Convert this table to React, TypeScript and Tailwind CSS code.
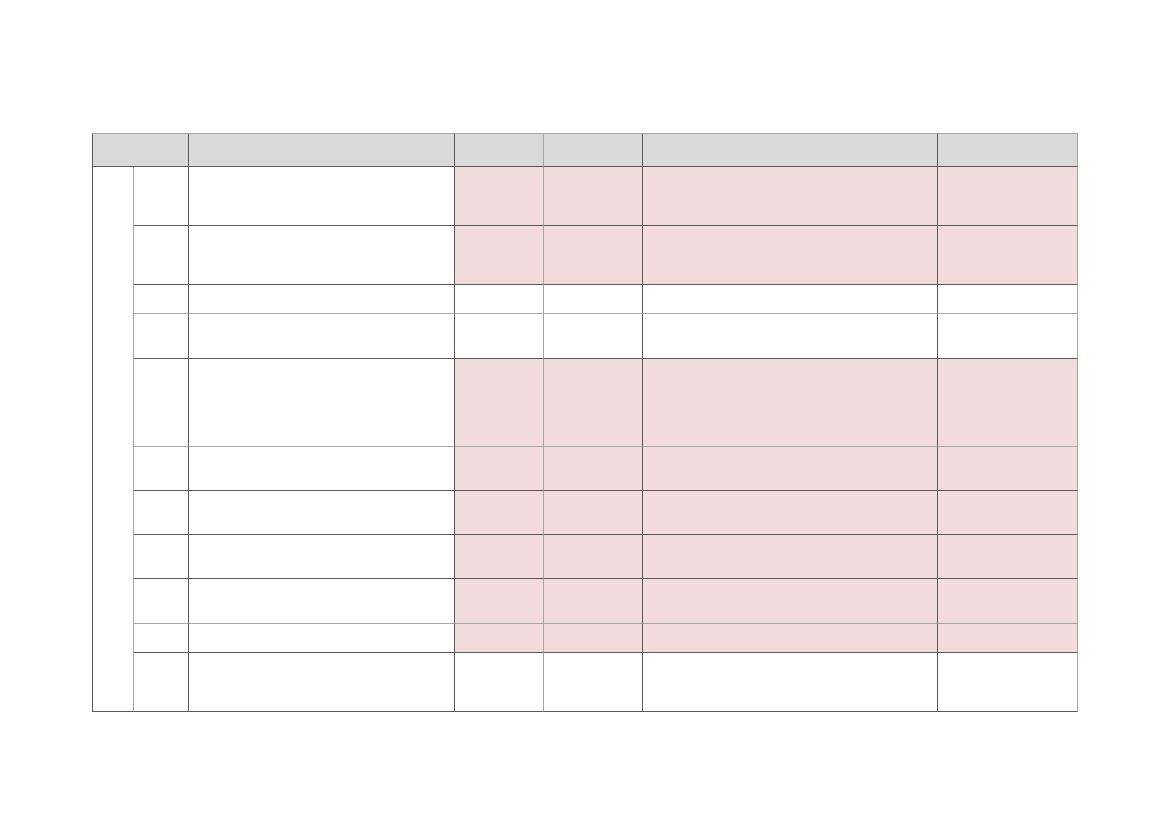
import React from "react"

// column widths include each cell's right border
const cols = [
  { w: "w-[41px]", line: "border-r-[#a6a6a6]" },
  { w: "w-[55px]", line: "border-r-[#595959]" },
  { w: "w-[266px]", line: "border-r-[#595959]" },
  { w: "w-[89px]", line: "border-r-[#a6a6a6]" },
  { w: "w-[99px]", line: "border-r-[#595959]" },
  { w: "w-[295px]", line: "border-r-[#595959]" },
  { w: "w-[140px]", line: "border-r-[#a6a6a6]" },
]

const rows = [
  { h: "h-[59px]", line: "border-b-[#595959]", pink: true },
  { h: "h-[59px]", line: "border-b-[#595959]", pink: true },
  { h: "h-[29px]", line: "border-b-[#a6a6a6]", pink: false },
  { h: "h-[45px]", line: "border-b-[#595959]", pink: false },
  { h: "h-[88px]", line: "border-b-[#a6a6a6]", pink: true },
  { h: "h-[44px]", line: "border-b-[#595959]", pink: true },
  { h: "h-[44px]", line: "border-b-[#595959]", pink: true },
  { h: "h-[44px]", line: "border-b-[#595959]", pink: true },
  { h: "h-[45px]", line: "border-b-[#a6a6a6]", pink: true },
  { h: "h-[29px]", line: "border-b-[#595959]", pink: true },
  { h: "h-[59px]", line: "border-b-[#595959]", pink: false },
]

export default function App() {
  return (
    <div className="w-[1169px] h-[826px] bg-white font-['Liberation_Sans',sans-serif] pt-[133px] pl-[92px]">
      <div className="inline-flex flex-col border-l border-t border-l-[#595959] border-t-[#a6a6a6]">
        {/* header */}
        <div className="flex h-[33px] bg-[#d9d9d9]">
          <div className="w-[96px] border-r border-b border-r-[#595959] border-b-[#595959]" />
          {cols.slice(2).map((c, i) => (
            <div key={i} className={`${c.w} border-r border-b border-b-[#595959] ${c.line}`} />
          ))}
        </div>

        <div className="flex">
          {/* merged first column */}
          <div className={`${cols[0].w} border-r border-b border-b-[#595959] ${cols[0].line}`} />
          <div className="flex flex-col">
            {rows.map((r, ri) => (
              <div key={ri} className={`flex ${r.h}`}>
                {cols.slice(1).map((c, ci) => (
                  <div
                    key={ci}
                    className={`${c.w} border-r border-b ${c.line} ${r.line} ${
                      r.pink && ci >= 2 ? "bg-[#f2dcdb]" : "bg-white"
                    }`}
                  />
                ))}
              </div>
            ))}
          </div>
        </div>
      </div>
    </div>
  )
}
